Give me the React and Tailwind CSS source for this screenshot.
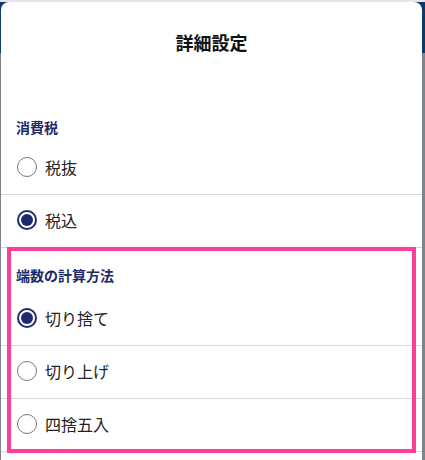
import React, { useState } from "react";

const font = { fontFamily: '"Noto Sans CJK JP", "Noto Sans", sans-serif' };

const sections = [
  {
    key: "tax",
    title: "消費税",
    options: [
      { value: "excluded", label: "税抜" },
      { value: "included", label: "税込" },
    ],
  },
  {
    key: "rounding",
    title: "端数の計算方法",
    options: [
      { value: "floor", label: "切り捨て" },
      { value: "ceil", label: "切り上げ" },
      { value: "round", label: "四捨五入" },
    ],
  },
];

// Radio circle: grey ring when off, navy ring + dot when on
const Radio = ({ checked }) => (
  <span
    className={
      checked
        ? "flex h-[20px] w-[20px] shrink-0 items-center justify-center rounded-full border-2 border-[#1f2a6e]"
        : "flex h-[20px] w-[20px] shrink-0 items-center justify-center rounded-full border-[1.5px] border-[#777777]"
    }
  >
    {checked && <span className="h-[12px] w-[12px] rounded-full bg-[#1f2a6e]" />}
  </span>
);

const App = () => {
  const [values, setValues] = useState({ tax: "included", rounding: "floor" });

  return (
    <div className="relative flex h-[460px] w-full flex-col overflow-hidden bg-[#7c848e]" style={font}>
      {/* page behind the sheet */}
      <div className="h-[2px] bg-[#e6e6e6]" />
      <div className="h-[51px] bg-[#0c3a6b]" />

      {/* settings sheet */}
      <div className="absolute left-[1px] right-[3px] top-[2px] bottom-0 overflow-hidden rounded-t-lg bg-white">
        <div className="flex justify-center pb-[44px] pt-[27px]">
          <h1 className="text-[18px] font-bold leading-[26px] text-[#111111]">詳細設定</h1>
        </div>

        {sections.map((section, i) => (
          <div key={section.key}>
            <h2
              className={
                i === 0
                  ? "pb-[5px] pl-[15px] pt-[18px] text-[14px] font-bold leading-[20px] text-[#1b2a6b]"
                  : "pb-[8px] pl-[15px] pt-[17px] text-[14px] font-bold leading-[20px] text-[#1b2a6b]"
              }
            >
              {section.title}
            </h2>
            {section.options.map((opt) => {
              const checked = values[section.key] === opt.value;
              return (
                <label
                  key={opt.value}
                  className="flex h-[53px] cursor-pointer items-center gap-[8px] border-b border-[#d9d9d9] pb-[2px] pl-[16px]"
                  onClick={() => setValues((prev) => ({ ...prev, [section.key]: opt.value }))}
                >
                  <Radio checked={checked} />
                  <span className="text-[16px] leading-[24px] text-[#222222]">{opt.label}</span>
                </label>
              );
            })}
          </div>
        ))}
      </div>

      {/* highlight frame around the rounding options */}
      <div className="pointer-events-none absolute left-[7px] top-[247px] h-[206px] w-[409px] border-4 border-[#ff3d9b]" />
    </div>
  );
};

export default App;
